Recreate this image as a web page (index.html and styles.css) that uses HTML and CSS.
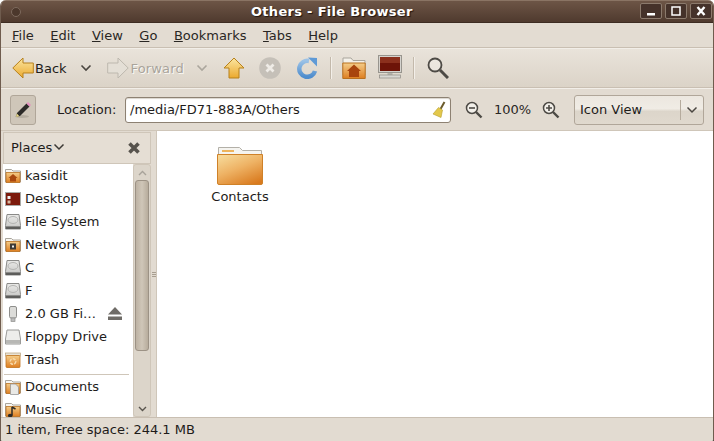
FILE: index.html
```html
<!DOCTYPE html>
<html lang="en">
<head>
<meta charset="utf-8">
<title>Others - File Browser</title>
<link rel="stylesheet" href="styles.css">
</head>
<body>
<svg class="defs" width="0" height="0">
  <defs>
    <linearGradient id="gold" x1="0" y1="0" x2="0" y2="1"><stop offset="0" stop-color="#fbe6a2"/><stop offset="1" stop-color="#eba92e"/></linearGradient>
    <linearGradient id="fold" x1="0" y1="0" x2="0" y2="1"><stop offset="0" stop-color="#f4cd8a"/><stop offset="1" stop-color="#de7e20"/></linearGradient>
    <linearGradient id="fold-big" x1="0.2" y1="0" x2="0.8" y2="1"><stop offset="0" stop-color="#f6d796"/><stop offset="0.45" stop-color="#eeb264"/><stop offset="1" stop-color="#d97a1e"/></linearGradient>
    <linearGradient id="blue" x1="0" y1="0" x2="0" y2="1"><stop offset="0" stop-color="#9cc2e6"/><stop offset="1" stop-color="#4f8dcd"/></linearGradient>
    <linearGradient id="disk" x1="0" y1="0" x2="0" y2="1"><stop offset="0" stop-color="#eaeae8"/><stop offset="0.75" stop-color="#cfcfcd"/><stop offset="1" stop-color="#8a8a88"/></linearGradient>
    <symbol id="i-home" viewBox="0 0 16 16"><path d="M.5 1.500h6l1.500 1.500h7.500v11h-15z" fill="#f7f5f0" stroke="#a9a59c"/><path d="M1 4.500h14v10H1z" fill="url(#fold)" stroke="#b9701f" stroke-width=".8"/><path d="M8 6l-4.500 4h1.500v3.500h6V10h1.500z" fill="#a9480f"/></symbol>
    <symbol id="i-desk" viewBox="0 0 16 16"><rect x=".5" y="1.500" width="15" height="13" fill="#7c1a0c" stroke="#a9a9a5"/><rect x="2.500" y="5" width="3" height="3" fill="#eee"/><rect x="2.500" y="9.500" width="3" height="3" fill="#d9b9a0"/></symbol>
    <symbol id="i-disk" viewBox="0 0 16 16"><path d="M2 .5h12l1.500 11v3.500H.5v-3.500z" fill="url(#disk)" stroke="#8a8a88"/><ellipse cx="8" cy="6" rx="5" ry="3.500" fill="none" stroke="#b4b4b2"/><path d="M1 12.500h14V15H1z" fill="#5d5d5b"/></symbol>
    <symbol id="i-net" viewBox="0 0 16 16"><path d="M.5 1.500h6l1.500 1.500h7.500v11h-15z" fill="#f7f5f0" stroke="#a9a59c"/><path d="M1 4.500h14v10H1z" fill="url(#fold)" stroke="#b9701f" stroke-width=".8"/><rect x="5" y="6.500" width="6" height="6" fill="#3d3a36"/><rect x="7" y="8.500" width="2" height="2" fill="#eee"/></symbol>
    <symbol id="i-usb" viewBox="0 0 16 16"><rect x="4.500" y=".5" width="7" height="11.500" rx="1.500" fill="#dcdcd9" stroke="#8f8f8c"/><rect x="6" y="12" width="4" height="3.500" fill="#bbb" stroke="#8f8f8c" stroke-width=".7"/></symbol>
    <symbol id="i-floppy" viewBox="0 0 16 16"><path d="M2 1h12l1.500 9v5H.5v-5z" fill="#ededeb" stroke="#9a9a98"/><path d="M1 11h14v3.500H1z" fill="#b8b8b5"/></symbol>
    <symbol id="i-trash" viewBox="0 0 16 16"><rect x=".5" y="1" width="15" height="3" fill="#e9e3d6" stroke="#b79f78" stroke-width=".7"/><rect x="1" y="3.500" width="14" height="12" rx="1" fill="url(#fold)" stroke="#c0721c" stroke-width=".8"/><circle cx="8" cy="9.500" r="2.800" fill="none" stroke="#f8dcae" stroke-width="1.400" stroke-dasharray="3 1.200"/></symbol>
    <symbol id="i-docs" viewBox="0 0 16 16"><path d="M.5 1.500h6l1.500 1.500h7.500v11h-15z" fill="#f7f5f0" stroke="#a9a59c"/><path d="M1 4.500h14v10H1z" fill="url(#fold)" stroke="#b9701f" stroke-width=".8"/><path d="M5.500 5h5l3 3v7.500h-8z" fill="#e9e9e6" stroke="#999" stroke-width=".8"/></symbol>
    <symbol id="i-music" viewBox="0 0 16 16"><path d="M.5 1.500h6l1.500 1.500h7.500v11h-15z" fill="#f7f5f0" stroke="#a9a59c"/><path d="M1 4.500h14v10H1z" fill="url(#fold)" stroke="#b9701f" stroke-width=".8"/><path d="M7 5v8.500M7 5l3.500 2" stroke="#2d2a26" stroke-width="1.500" fill="none"/><ellipse cx="5.200" cy="13.500" rx="2.300" ry="1.700" fill="#2d2a26"/></symbol>
  </defs>
</svg>
<div class="window">
  <header class="titlebar">
    <span class="title-dot"></span>
    <span class="title">Others - File Browser</span>
    <div class="wm-buttons">
      <span class="wm-btn"><svg width="12" height="12" viewBox="0 0 12 12"><rect x="2" y="8" width="8" height="2.500" fill="#fff"/></svg></span>
      <span class="wm-btn"><svg width="12" height="12" viewBox="0 0 12 12"><rect x="2" y="2" width="8" height="8" fill="none" stroke="#fff" stroke-width="1.500"/></svg></span>
      <span class="wm-btn"><svg width="12" height="12" viewBox="0 0 12 12"><path d="M2.500 2l7 8M9.500 2l-7 8" stroke="#fff" stroke-width="2.400"/></svg></span>
    </div>
  </header>
  <nav class="menubar">
    <span class="menu"><u>F</u>ile</span>
    <span class="menu"><u>E</u>dit</span>
    <span class="menu"><u>V</u>iew</span>
    <span class="menu"><u>G</u>o</span>
    <span class="menu"><u>B</u>ookmarks</span>
    <span class="menu"><u>T</u>abs</span>
    <span class="menu"><u>H</u>elp</span>
  </nav>
  <div class="toolbar">
    <svg class="tool back" width="22" height="22" viewBox="0 0 22 22"><path d="M.8 11L11 1v5h10.300v10H11v5z" fill="url(#gold)" stroke="#b7811c" stroke-width="1"/></svg>
    <span class="tool-label">Back</span>
    <svg class="chev chev-back" width="12" height="8" viewBox="0 0 12 8"><path d="M1.500 1.500L6 6l4.500-4.500" fill="none" stroke="#4a4640" stroke-width="1.600"/></svg>
    <svg class="tool forward" width="22" height="22" viewBox="0 0 22 22"><path d="M21.200 11L11 1v5H.7v10H11v5z" fill="#e4dfd6" stroke="#bdb8ae" stroke-width="1"/></svg>
    <span class="tool-label disabled">Forward</span>
    <svg class="chev chev-fwd" width="12" height="8" viewBox="0 0 12 8"><path d="M1.500 1.500L6 6l4.500-4.500" fill="none" stroke="#aba69d" stroke-width="1.600"/></svg>
    <svg class="tool up" width="22" height="22" viewBox="0 0 22 22"><path d="M11 1l10 10h-5v10H6V11H1z" fill="url(#gold)" stroke="#b7811c"/></svg>
    <svg class="tool stop" width="22" height="22" viewBox="0 0 22 22"><circle cx="11" cy="11" r="10.800" fill="#c5c0b8"/><path d="M7.500 7.500l7 7M14.500 7.500l-7 7" stroke="#efece7" stroke-width="2.800"/></svg>
    <svg class="tool reload" width="22" height="22" viewBox="0 0 22 22"><path d="M19 14A8 8 0 1 1 13 4" fill="none" stroke="url(#blue)" stroke-width="4.500"/><path d="M12 0.500L21 1v8.500z" fill="#5f9ad6"/></svg>
    <span class="sep"></span>
    <svg class="tool home" width="24" height="22" viewBox="0 0 24 22"><path d="M1 1h8l2 2.500h12V18H1z" fill="#f4f1ea" stroke="#a9a59c"/><path d="M.8 6h22.400v15.500H.8z" fill="url(#fold)" stroke="#b9701f"/><path d="M12 7.500l-7 6.500h2v6h10v-6h2z" fill="#a8450e"/></svg>
    <svg class="tool computer" width="24" height="24" viewBox="0 0 24 24"><rect x=".5" y=".5" width="23" height="17" fill="#d5d3ce" stroke="#98958e"/><rect x="2" y="2" width="20" height="14" fill="#6d1408"/><rect x="2" y="2" width="20" height="6" fill="#a0432c" opacity=".6"/><path d="M9.500 18h5v2h-5z" fill="#b5b2ab"/><rect x="1.500" y="20" width="21" height="3" fill="#d9d7d2" stroke="#8d8a84" stroke-width=".7"/></svg>
    <span class="sep sep-2"></span>
    <svg class="tool search" width="22" height="22" viewBox="0 0 22 22"><circle cx="8" cy="8" r="6.500" fill="#f3f0ea" fill-opacity=".5" stroke="#4d4a45" stroke-width="1.800"/><path d="M13 13l8 8" stroke="#4d4a45" stroke-width="3"/></svg>
  </div>
  <div class="locationbar">
    <span class="pencil-btn"><svg width="18" height="18" viewBox="0 0 18 18"><ellipse cx="8" cy="15.500" rx="7" ry="1.500" fill="#b5ada0"/><path d="M3 12L12.500 2.500l3 3L6 15l-4 1z" fill="#2c2a28"/><path d="M12.500 2.500L14 1l3 3-1.500 1.500z" fill="#e68fc0"/><path d="M2 16l.8-3.500 2.700 2.700z" fill="#e9d98a"/></svg></span>
    <span class="loc-label">Location:</span>
    <div class="entry">
      <span class="entry-text">/media/FD71-883A/Others</span>
      <svg class="broom" width="14" height="18" viewBox="0 0 14 18"><path d="M12.500 1L8.500 8" stroke="#6b5b2c" stroke-width="2"/><path d="M6.500 6.500l4 2.500-1.500 7.500-8-3.500z" fill="#e3c84b" stroke="#b59c2a" stroke-width=".6"/></svg>
    </div>
    <svg class="zoom-out" width="18" height="18" viewBox="0 0 18 18"><circle cx="7" cy="7" r="5.500" fill="#f3f0ea" stroke="#4d4a45" stroke-width="1.500"/><path d="M4 7h6" stroke="#4d4a45" stroke-width="1.600"/><path d="M11 11l5.500 5.500" stroke="#4d4a45" stroke-width="2.400"/></svg>
    <span class="zoom-val">100%</span>
    <svg class="zoom-in" width="18" height="18" viewBox="0 0 18 18"><circle cx="7" cy="7" r="5.500" fill="#f3f0ea" stroke="#4d4a45" stroke-width="1.500"/><path d="M4 7h6M7 4v6" stroke="#4d4a45" stroke-width="1.600"/><path d="M11 11l5.500 5.500" stroke="#4d4a45" stroke-width="2.400"/></svg>
    <div class="combo">
      <span class="combo-text">Icon View</span>
      <span class="combo-div"></span>
      <svg class="combo-arrow" width="12" height="8" viewBox="0 0 12 8"><path d="M1.500 1.500L6 6l4.500-4.500" fill="none" stroke="#4a4640" stroke-width="1.500"/></svg>
    </div>
  </div>
  <div class="content">
    <aside class="sidebar">
      <div class="places-head">
        <span class="places-title">Places</span>
        <svg class="places-chev" width="12" height="8" viewBox="0 0 12 8"><path d="M1.500 1.500L6 6l4.500-4.500" fill="none" stroke="#3c3935" stroke-width="1.500"/></svg>
        <svg class="places-close" width="14" height="14" viewBox="0 0 14 14"><path d="M2.500 2.500l9 9M11.500 2.500l-9 9" stroke="#57534d" stroke-width="3.600"/></svg>
      </div>
      <div class="places-body">
        <ul class="places">
          <li class="place"><svg class="pi"><use href="#i-home"/></svg>kasidit</li>
          <li class="place"><svg class="pi"><use href="#i-desk"/></svg>Desktop</li>
          <li class="place"><svg class="pi"><use href="#i-disk"/></svg>File System</li>
          <li class="place"><svg class="pi"><use href="#i-net"/></svg>Network</li>
          <li class="place"><svg class="pi"><use href="#i-disk"/></svg>C</li>
          <li class="place"><svg class="pi"><use href="#i-disk"/></svg>F</li>
          <li class="place"><svg class="pi"><use href="#i-usb"/></svg>2.0 GB Fi…<svg class="eject" width="14" height="13" viewBox="0 0 14 13"><path d="M7 0L14 7.500H0z" fill="#6f6c67"/><rect y="9.500" width="14" height="3.500" fill="#6f6c67"/></svg></li>
          <li class="place"><svg class="pi"><use href="#i-floppy"/></svg>Floppy Drive</li>
          <li class="place"><svg class="pi"><use href="#i-trash"/></svg>Trash</li>
          <li class="place-sep"></li>
          <li class="place"><svg class="pi"><use href="#i-docs"/></svg>Documents</li>
          <li class="place place-last"><svg class="pi"><use href="#i-music"/></svg>Music</li>
        </ul>
        <div class="scrollbar">
          <svg class="sb-arrow" width="9" height="6" viewBox="0 0 9 6"><path d="M1 5l3.500-3.500L8 5" fill="none" stroke="#a8a39a" stroke-width="1.400"/></svg>
          <span class="sb-thumb"></span>
          <svg class="sb-arrow sb-down" width="9" height="6" viewBox="0 0 9 6"><path d="M1 1l3.500 3.500L8 1" fill="none" stroke="#59554e" stroke-width="1.400"/></svg>
        </div>
      </div>
    </aside>
    <div class="pane-handle"><span></span><span></span><span></span></div>
    <main class="iconview">
      <figure class="file">
        <svg width="48" height="40" viewBox="0 0 48 40"><path d="M2.500 1.500h21l3 3h19v8h-43z" fill="#f5f4f0" stroke="#b3b0a8"/><path d="M6 4h12v2H6z" fill="#eeb45c"/><path d="M1.500 8.500h45V37a1.500 1.500 0 0 1-1.500 1.500H3A1.500 1.500 0 0 1 1.500 37z" fill="url(#fold-big)" stroke="#cf8128"/></svg>
        <figcaption>Contacts</figcaption>
      </figure>
    </main>
  </div>
  <footer class="statusbar">1 item, Free space: 244.1 MB</footer>
</div>
</body>
</html>
```
FILE: styles.css
```css
* { box-sizing: border-box; }
html { margin: 0; padding: 0; background: linear-gradient(#fff 50%, #3a3a32 50%); }
body { margin: 0; padding: 0; width: 714px; height: 441px; overflow: hidden; font-family: "DejaVu Sans", sans-serif; font-size: 13px; color: #1e1c1a; }
.defs { position: absolute; }
.window { width: 714px; height: 441px; display: flex; flex-direction: column; background: #e2dbd1; border-radius: 6px 6px 2px 2px; overflow: hidden; border-left: 1px solid #6f5c4e; border-right: 1px solid #6f5c4e; }
.titlebar { height: 23px; flex: none; position: relative; display: flex; align-items: center; padding-left: 250px; background: linear-gradient(#6d5546, #4f3a2e); border-top: 1px solid #8a7464; border-bottom: 1px solid #3d2c22; }
.title-dot { position: absolute; left: 10px; top: 6px; width: 10px; height: 10px; border-radius: 50%; border: 1px solid #7d6a5d; background: #4c382c; }
.title { font-weight: bold; color: #fff; font-size: 13px; text-shadow: 1px 1px 1px #1f140e; letter-spacing: 0.3px; }
.wm-buttons { position: absolute; right: 0; top: 2px; display: flex; gap: 3px; padding-right: 1px; }
.wm-btn { width: 22px; height: 16px; display: flex; align-items: center; justify-content: center; border: 1px solid #8b7a6c; border-radius: 2px; background: #45322a; }
.menubar { height: 25px; flex: none; display: flex; align-items: center; padding-left: 11px; gap: 16.5px; border-bottom: 1px solid #c9bfb2; background: #e3dcd2; color: #2a2724; }
.menu u { text-underline-offset: 1px; }
.toolbar { height: 40px; flex: none; display: flex; align-items: center; border-top: 1px solid #f2eee8; border-bottom: 1px solid #c9bfb2; background: linear-gradient(#e9e3da, #dbd3c7); }
.tool { flex: none; }
.back { margin-left: 11px; }
.tool-label { margin-left: 1px; }
.tool-label.disabled { color: #a9a49b; text-shadow: 1px 1px 0 #fbf9f6; margin-left: 2px; letter-spacing: 0.15px; }
.chev-back { margin-left: 13px; }
.forward { margin-left: 15px; }
.chev-fwd { margin-left: 12px; }
.up { margin-left: 15px; }
.stop { margin-left: 14px; }
.reload { margin-left: 15px; }
.sep { width: 1px; height: 22px; background: #c3b9ab; margin-left: 12px; box-shadow: 1px 0 0 #f3efe9; }
.home { margin-left: 11px; }
.computer { margin-left: 12px; margin-top: -2px; }
.sep-2 { margin-left: 11px; }
.search { margin-left: 13px; }
.locationbar { height: 43px; flex: none; display: flex; align-items: center; border-top: 1px solid #f2eee8; background: #e2dbd1; border-bottom: 1px solid #cfc6b9; }
.pencil-btn { width: 26px; height: 30px; margin-left: 9px; display: flex; align-items: center; justify-content: center; border: 1px solid #b0a699; border-radius: 3px; background: #cfc6b9; }
.loc-label { margin-left: 21px; width: 59px; white-space: nowrap; }
.entry { width: 326px; height: 26px; margin-left: 9px; display: flex; align-items: center; justify-content: space-between; padding: 0 4px 0 4px; background: #fff; border: 1px solid #8d8172; border-radius: 3px; box-shadow: inset 0 1px 1px #d9d4cc; }
.zoom-out { margin-left: 14px; }
.zoom-val { margin-left: 11px; width: 37px; color: #2a2724; }
.zoom-in { margin-left: 11px; }
.combo { width: 130px; height: 30px; margin-left: 14px; display: flex; align-items: center; padding-left: 5px; border: 1px solid #b0a699; border-radius: 3px; background: linear-gradient(#ece7df, #f0ece5 45%, #dcd5ca 55%, #e0d9ce); }
.combo-text { flex: 1; }
.combo-div { width: 1px; height: 20px; background: #b5ab9d; }
.combo-arrow { margin: 0 5px; }
.content { flex: 1; min-height: 0; display: flex; padding-left: 2px; background: #e2dbd1; }
.sidebar { width: 148px; flex: none; display: flex; flex-direction: column; padding-top: 1px; }
.places-head { height: 32px; flex: none; display: flex; align-items: center; padding: 0 0 2px 7px; border: 1px solid #cfc6b9; background: #e5ded4; }
.places-chev { margin-left: 1px; }
.places-close { margin-left: auto; margin-right: 9px; margin-top: 1px; }
.places-body { flex: 1; min-height: 0; display: flex; overflow: hidden; }
.places { list-style: none; margin: 0; padding: 0; width: 130px; flex: none; background: #fff; overflow: hidden; }
.place { height: 23px; display: flex; align-items: center; padding-left: 2px; white-space: nowrap; }
.place-last { height: 20px; padding-top: 3px; }
.pi { width: 16px; height: 16px; margin-right: 4px; flex: none; }
.eject { margin-left: 12px; }
.place-sep { height: 1px; margin: 3px 0 0 1px; width: 125px; background: #cfc6b9; }
.scrollbar { width: 18px; flex: none; display: flex; flex-direction: column; align-items: center; border: 1px solid #cfc6b9; border-radius: 3px; background: #dcd5ca; }
.sb-arrow { flex: none; margin-top: 5px; }
.sb-thumb { width: 14px; height: 171px; margin-top: 4px; border-radius: 3px; border: 1px solid #9c9285; background: linear-gradient(90deg, #bdb2a3, #cfc6b8 50%, #b7ac9c); flex: none; }
.sb-down { margin-top: auto; margin-bottom: 4px; }
.pane-handle { width: 5px; flex: none; display: flex; flex-direction: column; justify-content: center; align-items: center; gap: 1px; }
.pane-handle span { width: 4px; height: 1px; background: #a89e90; }
.iconview { flex: 1; background: #fff; border-left: 1px solid #cfc6b9; padding: 15px 0 0 48px; }
.file { margin: 0; width: 70px; display: flex; flex-direction: column; align-items: center; }
.file figcaption { margin-top: 3px; line-height: 16px; }
.statusbar { height: 24px; flex: none; display: flex; align-items: center; padding-left: 4px; border-top: 1px solid #c9bfb2; background: #e2dbd1; }
```
